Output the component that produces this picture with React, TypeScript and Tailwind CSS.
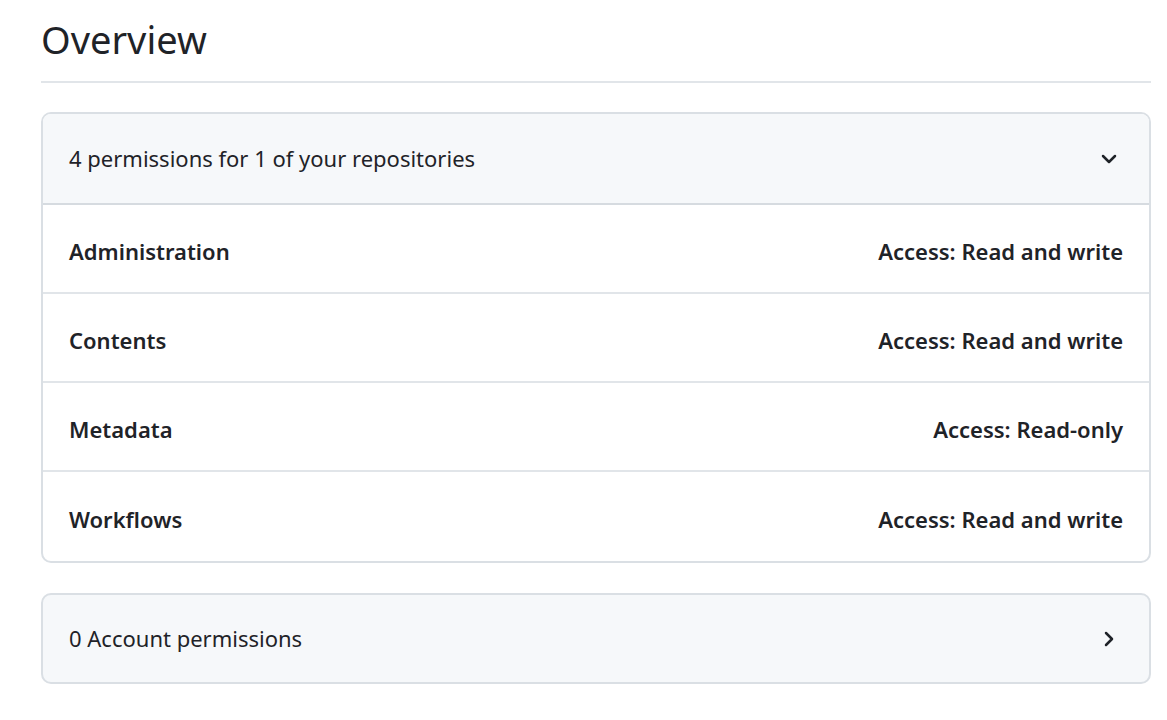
import { ChevronDown, ChevronRight } from "lucide-react";

const permissions = [
  { name: "Administration", access: "Access: Read and write" },
  { name: "Contents", access: "Access: Read and write" },
  { name: "Metadata", access: "Access: Read-only" },
  { name: "Workflows", access: "Access: Read and write" },
];

const App = () => {
  return (
    <div className="min-h-screen bg-white font-['Noto_Sans',sans-serif] text-[#1f2328]">
      <div className="ml-[41px] w-[1110px]">
        {/* Subhead */}
        <div className="border-b-2 border-[#e1e5e9] pt-[14px] pb-[17px]">
          <h2 className="text-[38px] font-normal leading-[50px]">Overview</h2>
        </div>

        {/* Repository permissions */}
        <div className="mt-[29px] overflow-hidden rounded-[10px] border-2 border-[#dadfe4]">
          <div className="flex h-[91px] items-center justify-between border-b-2 border-[#d6dbe0] bg-[#f6f8fa] px-[26px]">
            <span className="text-[22px]">4 permissions for 1 of your repositories</span>
            <ChevronDown size={24} strokeWidth={2.5} className="mr-[2px] text-[#1f2328]" />
          </div>
          <div className="divide-y-2 divide-[#e1e5e9]">
            {permissions.map((p) => (
              <div key={p.name} className="flex h-[89px] items-center justify-between px-[26px] pt-[5px]">
                <span className="text-[22px] font-semibold">{p.name}</span>
                <span className="text-[22px] font-semibold">{p.access}</span>
              </div>
            ))}
          </div>
        </div>

        {/* Account permissions */}
        <div className="mt-[30px] flex h-[91px] items-center justify-between rounded-[10px] border-2 border-[#dadfe4] bg-[#f6f8fa] px-[26px]">
          <span className="text-[22px]">0 Account permissions</span>
          <ChevronRight size={24} strokeWidth={2.5} className="mr-[2px] text-[#1f2328]" />
        </div>
      </div>
    </div>
  );
};

export default App;
